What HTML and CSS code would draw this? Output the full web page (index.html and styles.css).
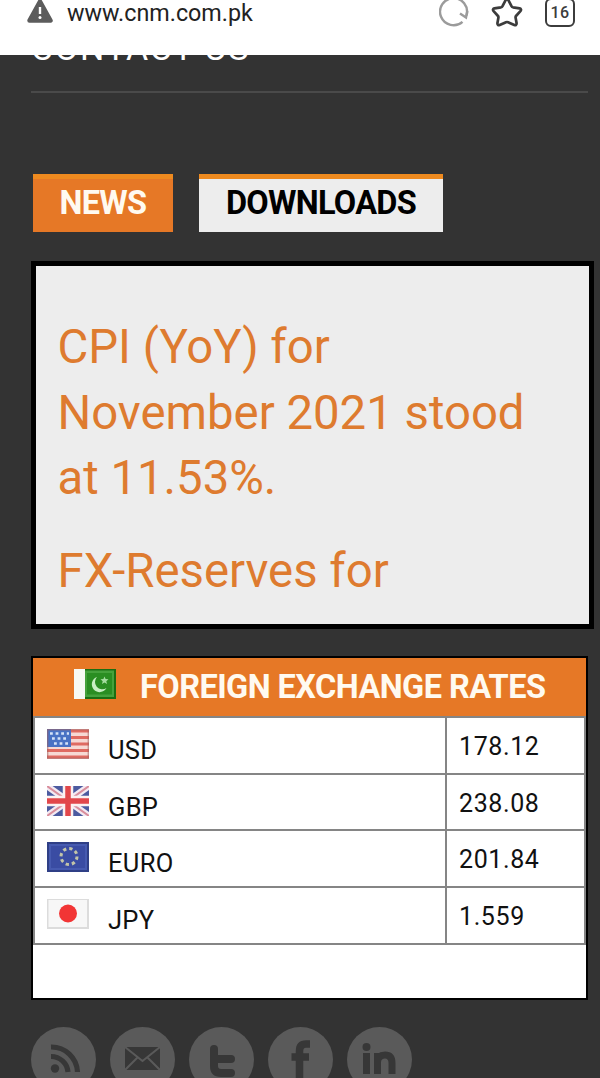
FILE: index.html
```html
<!DOCTYPE html>
<html lang="en">
<head>
    <meta charset="UTF-8">
    <meta name="viewport" content="width=device-width, initial-scale=1.0">
    <title>www.cnm.com.pk</title>
    <link rel="stylesheet" href="styles.css">
</head>
<body>
<header class="browser-bar">
    <svg class="warning" width="26" height="24" viewBox="0 0 26 24">
        <path d="M13 1.500 L23.500 20.500 H2.500 Z" fill="#5c5c5c" stroke="#5c5c5c" stroke-width="4.500" stroke-linejoin="round"/>
        <path d="M13 7V14" stroke="#fff" stroke-width="2.400"/>
        <circle cx="13" cy="17.500" r="1.500" fill="#fff"/>
    </svg>
    <span class="url">www.cnm.com.pk</span>
    <div class="browser-icons">
        <svg width="32" height="30" viewBox="0 0 32 30" fill="none" stroke="#9b9b9b" stroke-width="2.400">
            <path d="M23.500 21.800A13.500 13.500 0 1 1 27.500 15.500"/>
            <path d="M21 13.500L27 17.500L28.300 11"/>
        </svg>
        <svg width="34" height="30" viewBox="0 0 34 30" fill="none" stroke="#3c3c3c" stroke-width="2.700" stroke-linejoin="round">
            <path d="M14.600 .2Q16 -2 17.400 .2L20.500 6.200Q21 7.100 22 7.300L28.600 8.400Q31 9.200 29.400 11.200L25 16Q24.400 16.700 24.600 17.700L25.600 23.300Q25.600 25.700 23.300 25L17 22.200Q16 21.800 15 22.200L8.700 25Q6.400 25.700 6.400 23.300L7.400 17.700Q7.600 16.700 7 16L2.600 11.200Q1 9.200 3.400 8.400L10 7.300Q11 7.100 11.500 6.200Z"/>
        </svg>
        <span class="tab-count">16</span>
    </div>
</header>

<main class="page">
    <nav class="menu">
        <a class="menu-item">CONTACT US</a>
    </nav>

    <div class="tabs">
        <a class="tab active">NEWS</a>
        <a class="tab downloads">DOWNLOADS</a>
    </div>

    <section class="news">
        <p>CPI (YoY) for<br>November 2021 stood<br>at 11.53%.</p>
        <p>FX-Reserves for</p>
    </section>

    <section class="rates">
        <h2 class="rates-title">
            <svg class="flag" width="42" height="30" viewBox="0 0 42 30">
                <rect width="42" height="30" fill="#1a6e12"/>
                <rect x="11" y="1.500" width="29" height="26.500" fill="#45a23c"/>
                <rect x="13" y="4" width="25" height="21.500" fill="#2a8e22"/>
                <rect width="11" height="30" fill="#f7faf4"/>
                <path d="M23 8A7.800 7.800 0 1 0 32.500 19A7.300 7.300 0 0 1 23 8Z" fill="#c9efc4"/>
                <path d="M30.500 7.500l1.100 2.600 2.900.2-2.200 1.900.7 2.800-2.500-1.500-2.500 1.500.7-2.800-2.200-1.900 2.900-.2z" fill="#a5dda0"/>
            </svg>
            <span>FOREIGN EXCHANGE RATES</span>
        </h2>
        <div class="rate-table">
            <div class="rate-row">
                <div class="currency">
                    <svg class="flag" width="42" height="30" viewBox="0 0 42 30">
                        <rect width="42" height="30" fill="#f6d9d4"/>
                        <path d="M0 2H42M0 8.500H42M0 15H42M0 21.500H42M0 28H42" stroke="#df6b62" stroke-width="2.800"/>
                        <rect width="24" height="18" fill="#4972c4"/>
                        <path d="M3 4.500H22M5 9.500H20M7 14.500H22" stroke="#d5e3f8" stroke-width="2.600" stroke-dasharray="2.800 2.800"/>
                        <rect x=".7" y=".7" width="40.600" height="28.600" fill="none" stroke="#a0605e" stroke-opacity=".55" stroke-width="1.400"/>
                    </svg>
                    <span>USD</span>
                </div>
                <div class="rate">178.12</div>
            </div>
            <div class="rate-row">
                <div class="currency">
                    <svg class="flag" width="42" height="30" viewBox="0 0 42 30">
                        <rect width="42" height="30" fill="#4c5ba0"/>
                        <path d="M0 0L42 30M42 0L0 30" stroke="#f3eaf2" stroke-width="6.500"/>
                        <path d="M0 0L42 30M42 0L0 30" stroke="#d98e9c" stroke-width="2"/>
                        <path d="M21 0V30M0 15H42" stroke="#fbf1f1" stroke-width="10.500"/>
                        <path d="M21 0V30M0 15H42" stroke="#e2474b" stroke-width="5.500"/>
                    </svg>
                    <span>GBP</span>
                </div>
                <div class="rate">238.08</div>
            </div>
            <div class="rate-row">
                <div class="currency">
                    <svg class="flag" width="42" height="30" viewBox="0 0 42 30">
                        <rect width="42" height="30" fill="#2f3f86"/>
                        <rect x="2" y="2" width="38" height="26" fill="#465ab0"/>
                        <rect x="4" y="4" width="34" height="22" fill="#3a4ca3"/>
                        <circle cx="22" cy="14.500" r="8" fill="none" stroke="#c3c5a8" stroke-width="3" stroke-dasharray="3.300 2.980"/>
                    </svg>
                    <span>EURO</span>
                </div>
                <div class="rate">201.84</div>
            </div>
            <div class="rate-row">
                <div class="currency">
                    <svg class="flag" width="42" height="30" viewBox="0 0 42 30">
                        <rect width="42" height="30" fill="#dcdcdc"/>
                        <rect x="1.500" y="1" width="38.500" height="27" fill="#f7f7f7"/>
                        <circle cx="21" cy="14.500" r="9" fill="#f23535"/>
                    </svg>
                    <span>JPY</span>
                </div>
                <div class="rate">1.559</div>
            </div>
        </div>
    </section>

    <footer class="social">
        <svg class="social-icon" viewBox="0 0 65 65">
            <circle cx="32.500" cy="32.500" r="32.500" fill="#5a5a5a"/>
            <g fill="none" stroke="#373737" stroke-width="5.200">
                <path d="M20 20A26 26 0 0 1 46.500 45"/>
                <path d="M20 29.500A17 17 0 0 1 37 45"/>
            </g>
            <circle cx="24" cy="41.500" r="4.200" fill="#373737"/>
        </svg>
        <svg class="social-icon" viewBox="0 0 65 65">
            <circle cx="32.500" cy="32.500" r="32.500" fill="#5a5a5a"/>
            <rect x="15" y="20" width="35" height="23" fill="#373737"/>
            <path d="M15 20L32.500 34L50 20M15 43L27.500 30.500M50 43L37.500 30.500" fill="none" stroke="#5a5a5a" stroke-width="2"/>
        </svg>
        <svg class="social-icon" viewBox="0 0 65 65">
            <circle cx="32.500" cy="32.500" r="32.500" fill="#5a5a5a"/>
            <path d="M25 22V39Q25 46 32 46H42M25 32H42" fill="none" stroke="#373737" stroke-width="8" stroke-linecap="round"/>
        </svg>
        <svg class="social-icon" viewBox="0 0 65 65">
            <circle cx="32.500" cy="32.500" r="32.500" fill="#5a5a5a"/>
            <path d="M42 17H38Q31.500 17 31.500 24V55M23.500 30H41" fill="none" stroke="#373737" stroke-width="7.500"/>
        </svg>
        <svg class="social-icon" viewBox="0 0 65 65">
            <circle cx="32.500" cy="32.500" r="32.500" fill="#5a5a5a"/>
            <circle cx="19.500" cy="20" r="4" fill="#373737"/>
            <path d="M19.500 26V47M30.500 47V26M30.500 35Q31 28 38 28Q45 28 45 36V47" fill="none" stroke="#373737" stroke-width="7"/>
        </svg>
    </footer>
</main>
</body>
</html>
```

FILE: styles.css
```css
* {
    box-sizing: border-box;
}

body {
    margin: 0;
    height: 1078px;
    overflow: hidden;
    background-color: #333333;
    font-family: Roboto, "Liberation Sans", sans-serif;
    color: #111111;
}

/* Browser bar */
.browser-bar {
    display: flex;
    align-items: flex-start;
    height: 55px;
    padding-left: 27px;
    padding-right: 25px;
    background-color: #ffffff;
}

.url {
    margin-left: 14px;
    font-size: 23.300px;
    line-height: 27px;
    color: #222222;
}

.browser-icons {
    display: flex;
    gap: 20px;
    margin-left: auto;
}

.tab-count {
    width: 30px;
    height: 29px;
    margin-top: -2px;
    border: 2.500px solid #3c3c3c;
    border-radius: 6px;
    font-size: 16px;
    font-weight: 500;
    line-height: 25px;
    text-align: center;
    letter-spacing: 0.5px;
    color: #3c3c3c;
}

/* Page */
.page {
    padding: 0 0 0 31px;
}

.menu {
    width: 557px;
    height: 38px;
    overflow: hidden;
    border-bottom: 2px solid #4a4a4a;
}

.menu-item {
    display: block;
    margin-top: -24px;
    font-size: 34px;
    line-height: 34px;
    letter-spacing: 1.700px;
    color: #ffffff;
}

.tabs {
    display: flex;
    gap: 26px;
    margin-top: 81px;
    padding-left: 2px;
}

.tab {
    width: 140px;
    height: 58px;
    border-top: 5px solid #ee8a1f;
    background-color: #ededed;
    font-size: 32.500px;
    font-weight: bold;
    line-height: 49px;
    text-align: center;
    letter-spacing: -0.700px;
    color: #000000;
}

.tab.active {
    background-color: #e67826;
    color: #fffaf0;
}

.tab.downloads {
    width: 244px;
}

.news {
    width: 563px;
    height: 368px;
    margin-top: 29px;
    padding: 49px 21.500px 0;
    overflow: hidden;
    border: 5px solid #000000;
    background-color: #ededed;
    font-size: 47.300px;
    line-height: 65.500px;
    color: #de7b2f;
}

.news p {
    margin: 0 0 27px;
    white-space: nowrap;
}

/* Exchange rates */
.rates {
    width: 557px;
    height: 344px;
    margin-top: 27px;
    border: 2px solid #000000;
    background-color: #ffffff;
}

.rates-title {
    display: flex;
    align-items: flex-start;
    height: 58px;
    margin: 0;
    padding: 11px 0 0 41px;
    background-color: #e67826;
    font-size: 32.500px;
    line-height: 37px;
    letter-spacing: -0.550px;
    white-space: nowrap;
    color: #fffaf0;
}

.rates-title span {
    margin-left: 24px;
}

.rate-table {
    border: 2px solid #858585;
    border-bottom: 0;
}

.rate-row {
    display: flex;
    height: 56.700px;
    border-bottom: 2px solid #858585;
    font-size: 25px;
}

.currency {
    display: flex;
    align-items: flex-start;
    flex: 1;
    padding: 11px 0 0 12px;
}

.currency span {
    margin: 6px 0 0 19px;
    font-size: 25.500px;
    line-height: 30px;
    letter-spacing: 0.300px;
}

.rate {
    width: 139px;
    padding: 14px 0 0 12px;
    border-left: 2px solid #858585;
    line-height: 30px;
    letter-spacing: 0.600px;
}

.flag {
    flex: none;
}

/* Social links */
.social {
    display: flex;
    gap: 14px;
    margin-top: 27px;
}

.social-icon {
    width: 65px;
    height: 65px;
}
```
